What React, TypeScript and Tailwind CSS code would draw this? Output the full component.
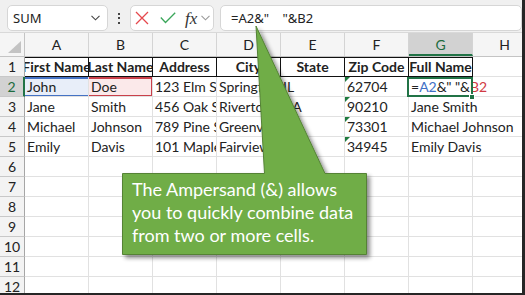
import React from "react";

const COLS = ["A", "B", "C", "D", "E", "F", "G", "H"];
const HEAD = ["First Name", "Last Name", "Address", "City", "State", "Zip Code", "Full Name", ""];
const DATA: string[][] = [
  ["John", "Doe", "123 Elm St", "Springfield", "IL", "62704", "__F__", ""],
  ["Jane", "Smith", "456 Oak St", "Riverton", "CA", "90210", "Jane Smith", ""],
  ["Michael", "Johnson", "789 Pine St", "Greenville", "TX", "73301", "Michael Johnson", ""],
  ["Emily", "Davis", "101 Maple Ave", "Fairview", "FL", "34945", "Emily Davis", ""],
];

function Toolbar() {
  return (
    <div className="h-[33px] bg-[#f0f0f0] border-b border-[#d9d9d9] flex items-start pt-[5px] pl-[7px]">
      <div className="w-[101px] h-[26px] shrink-0 bg-white border border-[#d6d6d6] rounded-[5px] flex items-center justify-between pl-[5px] pr-[7px]">
        <span className="font-['Noto_Sans',sans-serif] text-[13px] text-[#222] leading-none">SUM</span>
        <svg width="9" height="6" viewBox="0 0 9 6">
          <path d="M0.5 0.8 L4.5 4.8 L8.5 0.8" fill="none" stroke="#444" strokeWidth="1.1" />
        </svg>
      </div>
      <div className="w-[22px] h-[26px] shrink-0 flex flex-col items-center justify-center gap-[2.5px]">
        <div className="w-[2px] h-[2px] bg-[#444]" />
        <div className="w-[2px] h-[2px] bg-[#444]" />
        <div className="w-[2px] h-[2px] bg-[#444]" />
      </div>
      <div className="w-[84px] h-[26px] shrink-0 bg-white border border-[#d6d6d6] rounded-[5px] flex items-center pl-[4px]">
        <svg width="14" height="14" viewBox="0 0 14 14">
          <path d="M1 1 L13 13 M13 1 L1 13" stroke="#e5484d" strokeWidth="1.3" fill="none" />
        </svg>
        <svg width="16" height="12" viewBox="0 0 16 12" className="ml-[11px]">
          <path d="M0.8 5.5 L5.5 10.5 L15.2 0.8" stroke="#3aa65a" strokeWidth="1.3" fill="none" />
        </svg>
        <span className="ml-[9px] font-['Liberation_Serif',serif] italic text-[17px] leading-none text-[#333]">fx</span>
        <svg width="9" height="6" viewBox="0 0 9 6" className="ml-[4px]">
          <path d="M0.5 0.8 L4.5 4.8 L8.5 0.8" fill="none" stroke="#9a9a9a" strokeWidth="1.1" />
        </svg>
      </div>
      <div className="ml-[6px] w-[302px] h-[26px] shrink-0 bg-white border border-[#d6d6d6] rounded-[5px] flex items-center pl-[10px]">
        <span className="font-['Noto_Sans',sans-serif] text-[13px] text-[#222] leading-none whitespace-pre">{'=A2&"    "&B2'}</span>
      </div>
    </div>
  );
}

function ColHeader() {
  return (
    <div className="flex h-[24px] bg-[#f5f5f5] border-b border-[#c4c4c4]">
      <div className="w-[25px] shrink-0 border-r border-[#c4c4c4] relative">
        <svg width="13" height="12" viewBox="0 0 13 12" className="absolute right-[3px] bottom-[3px]">
          <path d="M13 0 L13 12 L0 12 Z" fill="#c3c3c3" />
        </svg>
      </div>
      {COLS.map((c) => (
        <div
          key={c}
          className={
            "w-[64px] shrink-0 border-r border-[#d4d4d4] flex items-center justify-center text-[14px] " +
            (c === "G" ? "bg-[#d2d2d2] text-[#1d6b3e] border-b-2 border-b-[#217346] pt-[2px]" : "text-[#222]")
          }
        >
          {c}
        </div>
      ))}
    </div>
  );
}

function RowHead({ n, sel }: { n: number; sel?: boolean }) {
  return (
    <div
      className={
        "w-[25px] shrink-0 flex items-end justify-center pb-[1px] text-[14px] leading-[17px] border-b border-[#c8c8c8] " +
        (sel
          ? "bg-[#d2d2d2] text-[#1d6b3e] border-r-2 border-r-[#217346]"
          : "bg-[#f3f3f3] text-[#222] border-r border-r-[#a6a6a6]")
      }
    >
      {n}
    </div>
  );
}

function HeaderRow() {
  return (
    <div className="flex h-[20px]">
      <RowHead n={1} />
      {HEAD.map((h, i) => (
        <div
          key={i}
          className={
            "w-[64px] shrink-0 overflow-hidden whitespace-nowrap flex items-end justify-center pb-[1px] text-[14px] leading-[17px] font-bold " +
            (i < 7
              ? "border-t border-b border-r border-[#111]"
              : "border-b border-r border-[#e1e1e1]")
          }
        >
          {h}
        </div>
      ))}
    </div>
  );
}

function Formula() {
  return (
    <span className="whitespace-pre">
      =<span className="text-[#3f6fc6]">A2</span>&amp;" "&amp;<span className="text-[#d13a44]">B2</span>
    </span>
  );
}

function Corner({ className, color }: { className: string; color: string }) {
  return <div className={"absolute w-[4px] h-[4px] " + className} style={{ background: color }} />;
}

function DataRow({ r, n }: { r: string[]; n: number }) {
  const sel = n === 2;
  return (
    <div className="flex h-[20px]">
      <RowHead n={n} sel={sel} />
      {r.map((v, i) => {
        const isG = i === 6;
        const base =
          "w-[64px] shrink-0 relative whitespace-nowrap flex items-end pl-[2px] pb-[1px] text-[14px] leading-[17px] border-b border-[#e1e1e1] ";
        let cls = base + (isG && v ? "overflow-visible z-10 " : "overflow-hidden border-r ");
        if (sel && i === 0) cls += "bg-[#e8eef9] ";
        if (sel && i === 1) cls += "bg-[#fbe9ea] ";
        return (
          <div key={i} className={cls}>
            {i === 5 && (
              <svg width="5" height="5" viewBox="0 0 5 5" className="absolute left-0 top-0">
                <path d="M0 0 L5 0 L0 5 Z" fill="#1f7a3e" />
              </svg>
            )}
            <span className="relative">{v === "__F__" ? <Formula /> : v}</span>
            {sel && i === 0 && (
              <>
                <div className="absolute left-0 right-[-1px] top-0 h-[2px] bg-[#4472c4]" />
                <div className="absolute left-0 right-[-1px] bottom-[-1px] h-[2px] bg-[#4472c4]" />
                <Corner className="left-[-1px] top-[-2px]" color="#4472c4" />
                <Corner className="left-[-1px] bottom-[-3px]" color="#4472c4" />
              </>
            )}
            {sel && i === 1 && (
              <>
                <div className="absolute left-[-2px] right-[-1px] top-0 bottom-[-1px] border-2 border-[#c9404a]" />
                <Corner className="left-[-3px] top-[-2px]" color="#c9404a" />
                <Corner className="right-[-3px] top-[-2px]" color="#c9404a" />
                <Corner className="left-[-3px] bottom-[-3px]" color="#c9404a" />
                <Corner className="right-[-3px] bottom-[-3px]" color="#c9404a" />
              </>
            )}
            {sel && isG && (
              <>
                <div className="absolute left-[-2px] right-0 top-0 bottom-[-1px] border-2 border-[#217346]" />
                <div className="absolute right-[-2px] bottom-[-4px] w-[6px] h-[6px] bg-[#217346] border border-white" />
              </>
            )}
          </div>
        );
      })}
    </div>
  );
}

function EmptyRow({ n }: { n: number }) {
  return (
    <div className="flex h-[20px]">
      <RowHead n={n} />
      {COLS.map((c) => (
        <div key={c} className="w-[64px] shrink-0 border-r border-b border-[#e1e1e1]" />
      ))}
    </div>
  );
}

function Callout() {
  return (
    <>
      <svg width="525" height="295" className="absolute left-0 top-0 pointer-events-none">
        <defs>
          <filter id="sh" x="-20%" y="-20%" width="140%" height="140%">
            <feDropShadow dx="3" dy="3" stdDeviation="2" floodColor="#000" floodOpacity="0.45" />
          </filter>
        </defs>
        <path
          d="M122.5 173.5 H264.5 L256 26 L325 173.5 H366.5 V254.5 H122.5 Z"
          fill="#70ad47"
          stroke="#548235"
          strokeWidth="1"
          filter="url(#sh)"
        />
      </svg>
      <div className="absolute left-[132px] top-[178px] w-[232px] text-white font-['Lato',sans-serif] text-[18px] leading-[23px]">
        The Ampersand (&amp;) allows
        <br />
        you to quickly combine data
        <br />
        from two or more cells.
      </div>
    </>
  );
}

export default function App() {
  return (
    <div className="relative w-[525px] h-[295px] overflow-hidden bg-white border-r-[3px] border-b-[2px] border-[#262626] font-['Lato',sans-serif] text-[#222]">
      <Toolbar />
      <div className="flex flex-col">
        <ColHeader />
        <HeaderRow />
        {DATA.map((r, i) => (
          <DataRow key={i} r={r} n={i + 2} />
        ))}
        {[6, 7, 8, 9, 10, 11, 12].map((n) => (
          <EmptyRow key={n} n={n} />
        ))}
      </div>
      <Callout />
    </div>
  );
}
